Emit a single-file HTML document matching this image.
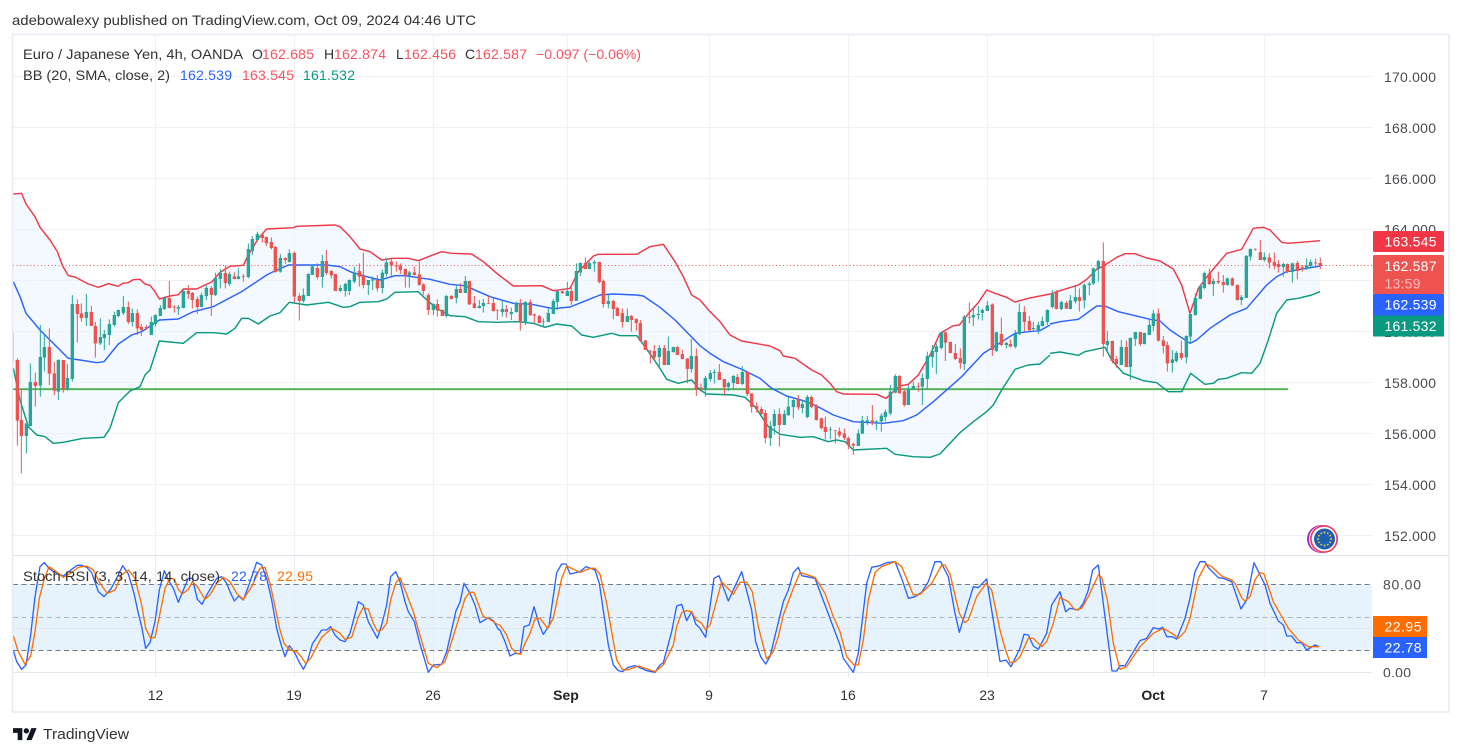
<!DOCTYPE html>
<html><head><meta charset="utf-8"><title>EUR/JPY</title>
<style>html,body{margin:0;padding:0;background:#fff}svg{display:block}
text{font-family:"Liberation Sans",Arial,sans-serif;font-size:14px;fill:#333;}
.w{fill:#fff}.a{fill:#4a4c52}.r{fill:#f7525f}.b{fill:#2962ff}.g{fill:#089981}.o{fill:#ff6d00}
.rw{fill:none;stroke:#ef5350;stroke-width:3}.rb{fill:none;stroke:#ef5350;stroke-width:10}
.gw{fill:none;stroke:#26a69a;stroke-width:3}.gb{fill:none;stroke:#26a69a;stroke-width:10}
.u,.m,.l,.sb,.so{fill:none;stroke-linejoin:round;stroke-width:4.3}
.u{stroke:#f23645}.m{stroke:#2962ff}.l{stroke:#089981}.sb{stroke:#2962ff;stroke-width:4}.so{stroke:#ff6d00;stroke-width:4}
.t{fill:#f3f9fe}.e{fill:#fff}
</style></head><body>
<svg width="1462" height="756" viewBox="0 0 1462 756" xmlns="http://www.w3.org/2000/svg">
<rect width="1462" height="756" fill="#fff"/>
<text x="12" y="25" textLength="464" lengthAdjust="spacingAndGlyphs">adebowalexy published on TradingView.com, Oct 09, 2024 04:46 UTC</text>

<!-- band fill -->
<g transform="translate(0,180) scale(.33333)">
<polygon class="t" points="40,42 65,40 78,72 105,110 120,142 150,180 172,215 188,258 205,287 225,291 265,312 295,322 325,311 355,319 368,310 385,308 400,299 420,298 435,312 450,316 463,332 478,357 510,348 535,344 550,327 590,327 615,315 635,306 660,277 690,259 730,256 745,225 775,175 800,147 880,143 890,139 1005,135 1020,140 1050,170 1050,1125 40,1125"/>
<polygon class="e" points="40,565 60,660 85,740 110,765 135,770 160,790 190,787 250,775 312,772 330,745 355,668 390,633 420,620 435,585 450,570 478,483 550,490 590,458 640,458 680,462 705,445 725,415 745,415 775,432 810,408 840,398 868,367 920,375 985,367 1030,382 1050,380 1050,1125 40,1125"/>
</g>
<g transform="translate(350,220) scale(.33333)">
<polygon class="t" points="0,50 30,87 60,95 95,120 130,115 175,115 205,122 235,110 275,95 305,100 365,102 400,125 440,160 490,198 575,197 610,212 640,208 660,205 685,155 730,108 745,103 860,103 900,80 940,73 975,125 1000,170 1025,225 1050,240 1050,1005 0,1005"/>
<polygon class="e" points="0,260 30,247 85,245 110,237 135,217 205,215 225,235 260,265 300,287 345,290 385,305 440,307 500,305 550,310 585,322 620,312 665,318 695,345 730,352 785,340 810,347 860,347 885,380 930,445 950,478 985,490 1025,480 1050,510 1050,1005 0,1005"/>
</g>
<g transform="translate(700,280) scale(.33333)">
<polygon class="t" points="0,60 30,95 60,125 90,165 125,183 165,190 210,198 240,212 250,228 285,235 335,270 365,285 390,310 410,335 430,342 530,343 558,355 585,330 600,318 625,313 655,285 690,225 720,160 760,137 778,135 810,95 835,68 860,30 885,40 920,52 945,66 985,55 1050,42 1050,825 0,825"/>
<polygon class="e" points="0,330 20,342 100,345 135,352 165,380 205,440 240,463 300,472 340,470 385,485 410,480 435,485 460,510 560,505 585,523 640,530 690,532 720,522 780,458 820,425 860,395 880,375 905,330 945,268 985,255 1020,252 1050,225 1050,825 0,825"/>
</g>
<g transform="translate(1050,220) scale(.33333)">
<polygon class="t" points="0,222 30,212 85,195 110,178 140,148 165,135 200,112 225,101 255,101 290,114 330,123 370,147 395,195 420,280 445,205 475,165 530,100 575,88 610,25 640,22 660,30 695,67 715,70 810,62 810,1005 0,1005"/>
<polygon class="e" points="0,400 30,396 85,406 105,395 165,382 185,420 220,460 280,482 320,488 355,515 395,515 422,460 465,493 490,490 505,478 530,475 575,458 605,460 630,430 655,360 680,280 710,240 745,235 785,225 810,215 810,1005 0,1005"/>
</g>

<!-- stoch background -->
<rect x="13" y="584" width="1359" height="66.5" fill="#e6f3fd"/>

<!-- grid -->
<g stroke="#eff1f6" stroke-width="1" fill="none">
<path d="M13 76.5H1372M13 127.5H1372M13 178.5H1372M13 229.5H1372M13 280.5H1372M13 331.5H1372M13 382.5H1372M13 433.5H1372M13 484.5H1372M13 535.5H1372"/>
<path d="M13 628.5H1372M13 672.5H1372" stroke="#e3e8ef"/>
<path d="M155.5 35V555M294.5 35V555M433.5 35V555M567.5 35V555M709.5 35V555M848.5 35V555M987.5 35V555M1153.5 35V555M1264.5 35V555"/>
<path d="M155.5 556V677M294.5 556V677M433.5 556V677M567.5 556V677M709.5 556V677M848.5 556V677M987.5 556V677M1153.5 556V677M1264.5 556V677" stroke="#e8ecf2"/>
</g>
<path d="M13 584.5H1372" stroke="#787b86" stroke-dasharray="5 3.5"/>
<path d="M13 617.5H1372" stroke="#b2b5be" stroke-dasharray="5 3.5"/>
<path d="M13 650.5H1372" stroke="#787b86" stroke-dasharray="5 3.5"/>

<!-- last price dotted -->
<path d="M13 265.5H1372" stroke="#ef5350" stroke-dasharray="1 2.5"/>

<!-- green horizontal -->
<path d="M13 389.2H1288" stroke="#4caf50" stroke-width="1.8"/>

<!-- bands -->
<g transform="translate(0,180) scale(.33333)">
<polyline class="u" points="40,42 65,40 78,72 105,110 120,142 150,180 172,215 188,258 205,287 225,291 265,312 295,322 325,311 355,319 368,310 385,308 400,299 420,298 435,312 450,316 463,332 478,357 510,348 535,344 550,327 590,327 615,315 635,306 660,277 690,259 730,256 745,225 775,175 800,147 880,143 890,139 1005,135 1020,140 1050,170"/>
<polyline class="m" points="40,305 60,350 78,400 120,450 175,505 205,535 240,540 290,548 312,545 355,492 395,465 425,455 478,420 535,417 580,395 640,380 725,335 800,285 820,275 865,255 980,255 1020,260 1050,275"/>
<polyline class="l" points="40,565 60,660 85,740 110,765 135,770 160,790 190,787 250,775 312,772 330,745 355,668 390,633 420,620 435,585 450,570 478,483 550,490 590,458 640,458 680,462 705,445 725,415 745,415 775,432 810,408 840,398 868,367 920,375 985,367 1030,382 1050,380"/>
<path d="M40 460V545" stroke="#ef5350" stroke-width="3" opacity=".5"/>
<path class="rw" d="M52 535V797M64 628V880M106 578V680M148 445V615M163 545V645M190 540V638M232 358V488M244 370V425M274 378V438M286 426V533M385 365V432M412 388V465M424 432V468M439 435V450M508 303V385M523 375V398M565 315V357M577 336V385M592 350V402M634 318V408M676 256V325M703 277V298M730 282V305M787 160V188M799 170V198M814 172V208M826 198V278M856 232V252M883 215V368M898 340V422M952 250V298M979 210V285M994 270V295M1006 282V333"/>
<path class="rb" d="M52 540V722M64 720V768M106 606V618M148 501V581M163 580V632M190 540V628M232 372V402M244 400V414M274 396V438M286 438V490M385 381V426M412 399V445M424 441V450M439 441V444M508 354V384M523 380V382M565 333V342M577 339V360M592 357V381M634 324V345M676 279V309M703 289V297M730 288V290M787 163V174M799 171V190M814 186V204M826 201V276M856 234V240M883 219V350M898 348V363M952 264V291M979 243V279M994 273V286M1006 282V333"/>
<path class="gw" d="M79 730V820M91 550V738M121 435V650M133 465V575M175 538V660M202 552V632M217 345V605M259 342V438M301 415V495M313 450V510M328 418V495M343 395V440M355 388V412M370 348V405M397 385V440M454 410V465M466 403V440M481 375V408M493 350V390M535 375V405M550 327V385M604 338V382M619 315V360M646 278V348M661 267V325M688 275V318M715 265V298M745 190V295M757 168V225M772 155V185M841 222V278M868 208V248M910 325V368M925 280V348M937 255V285M967 225V323M1021 315V335M1036 308V350M1048 298V345"/>
<path class="gb" d="M79 730V768M91 606V738M121 531V617M133 501V533M175 540V635M202 594V628M217 372V597M259 396V414M301 471V490M313 462V474M328 432V465M343 405V435M355 390V408M370 381V399M397 399V426M454 426V465M466 405V432M481 384V408M493 354V387M535 381V386M550 333V384M604 345V381M619 324V348M646 294V345M661 279V297M688 282V312M715 289V297M745 207V291M757 177V213M772 162V180M841 234V275M868 219V246M910 345V363M925 282V348M937 259V285M967 243V291M1021 324V333M1036 312V333M1048 300V333"/>
</g>
<g transform="translate(350,220) scale(.33333)">
<polyline class="u" points="0,50 30,87 60,95 95,120 130,115 175,115 205,122 235,110 275,95 305,100 365,102 400,125 440,160 490,198 575,197 610,212 640,208 660,205 685,155 730,108 745,103 860,103 900,80 940,73 975,125 1000,170 1025,225 1050,240"/>
<polyline class="m" points="0,155 50,170 90,180 135,167 165,167 240,178 300,193 345,197 420,230 490,250 545,253 610,266 660,261 700,245 750,225 790,222 860,225 880,228 930,262 975,300 1050,377"/>
<polyline class="l" points="0,260 30,247 85,245 110,237 135,217 205,215 225,235 260,265 300,287 345,290 385,305 440,307 500,305 550,310 585,322 620,312 665,318 695,345 730,352 785,340 810,347 860,347 885,380 930,445 950,478 985,490 1025,480 1050,510"/>
<path class="rw" d="M28 130V200M40 98V205M82 165V215M124 112V168M139 125V155M151 130V162M166 145V203M193 140V167M208 125V197M220 190V225M235 220V285M262 238V290M277 268V288M304 225V238M331 190V218M358 183V255M373 228V265M415 228V252M430 235V275M442 268V300M469 255V293M511 237V332M541 238V288M553 280V310M568 285V310M637 213V222M664 200V255M706 112V148M748 125V190M760 178V263M790 240V297M802 260V288M817 265V323M844 285V335M859 295V332M871 300V365M886 360V390M901 390V430M913 375V420M943 375V435M982 378V405M997 390V418M1012 415V490M1039 385V528"/>
<path class="rb" d="M28 153V170M40 168V195M82 180V205M124 125V137M139 137V139M151 137V150M166 147V167M193 157V165M208 163V195M220 193V213M235 225V270M262 252V272M277 270V288M304 228V237M331 207V219M358 183V253M373 250V264M415 250V252M430 249V273M442 270V272M469 267V276M511 249V306M541 246V285M553 283V287M568 288V309M637 214V219M664 213V243M706 129V147M748 126V186M760 183V252M790 243V267M802 264V288M817 279V306M844 288V300M859 297V309M871 309V363M886 361V390M901 392V394M913 393V412M943 384V435M982 381V405M997 402V417M1012 415V447M1039 408V510"/>
<path class="gw" d="M13 140V190M55 180V225M68 170V210M97 148V220M109 113V170M178 152V203M250 250V285M289 225V293M319 195V250M346 168V218M388 240V265M400 237V278M457 240V290M484 263V300M499 245V278M526 243V315M580 295V318M595 265V306M610 237V282M622 213V270M652 186V228M679 130V243M691 127V168M718 125V148M733 120V155M775 225V265M832 265V306M928 375V445M955 350V435M970 380V398M1024 357V458"/>
<path class="gb" d="M13 157V185M55 180V195M68 178V182M97 158V204M109 127V162M178 157V167M250 252V270M289 228V288M319 207V234M346 183V219M388 258V264M400 249V258M457 267V276M484 276V282M499 249V276M526 246V309M580 304V306M595 279V306M610 243V282M622 213V246M652 213V228M679 153V243M691 129V157M718 129V147M733 126V130M775 243V252M832 288V306M928 384V411M955 393V435M970 381V396M1024 408V447"/>
</g>
<g transform="translate(700,280) scale(.33333)">
<polyline class="u" points="0,60 30,95 60,125 90,165 125,183 165,190 210,198 240,212 250,228 285,235 335,270 365,285 390,310 410,335 430,342 530,343 558,355 585,330 600,318 625,313 655,285 690,225 720,160 760,137 778,135 810,95 835,68 860,30 885,40 920,52 945,66 985,55 1050,42"/>
<polyline class="m" points="0,197 30,220 70,245 130,270 180,295 215,325 260,348 310,362 350,378 400,405 460,425 550,430 610,422 650,405 700,365 785,290 850,220 890,195 945,160 985,155 1020,152 1050,135"/>
<polyline class="l" points="0,330 20,342 100,345 135,352 165,380 205,440 240,463 300,472 340,470 385,485 410,480 435,485 460,510 560,505 585,523 640,530 690,532 720,522 780,458 820,425 860,395 880,375 905,330 945,268 985,255 1020,252 1050,225"/>
<path class="rw" d="M3 310V335M58 252V300M73 297V347M112 282V312M142 275V348M155 340V398M170 367V398M184 380V405M196 390V490M238 385V500M295 345V390M334 347V385M349 373V422M364 412V448M376 410V478M406 450V490M418 443V472M433 445V480M445 470V508M460 488V525M517 375V435M598 285V340M613 330V380M655 308V335M736 155V243M751 185V220M766 192V240M781 205V267M808 67V130M877 70V228M904 113V198M931 178V202M973 78V155M988 108V152"/>
<path class="rb" d="M3 323V327M58 276V300M73 297V322M112 291V312M142 276V342M155 340V381M170 378V387M184 387V402M196 399V474M238 402V435M295 358V382M334 351V381M349 376V420M364 415V444M376 441V456M406 451V453M418 454V466M433 460V474M445 474V495M460 492V497M517 421V430M598 288V340M613 334V375M655 318V320M736 157V188M751 186V219M766 219V237M781 234V249M808 111V113M877 73V210M904 162V195M931 192V200M973 96V126M988 123V151"/>
<path class="gw" d="M16 288V350M31 270V305M43 268V310M85 305V333M100 285V327M127 258V315M211 423V498M223 388V465M253 390V435M265 352V408M280 358V415M307 360V400M322 345V415M391 440V478M475 448V498M487 408V462M502 408V435M529 420V450M544 400V455M556 388V425M571 315V405M586 283V340M625 315V375M640 305V330M667 280V375M682 215V325M697 195V262M709 190V282M724 155V208M793 105V270M820 80V138M835 78V118M847 85V122M862 63V93M889 155V216M919 185V205M946 150V205M958 70V165M1000 125V155M1015 125V162M1027 110V140M1042 88V135"/>
<path class="gb" d="M16 294V330M31 279V297M43 276V279M85 309V321M100 288V309M127 276V312M211 438V474M223 402V438M253 402V435M265 380V405M280 360V381M307 372V384M322 351V411M391 447V449M475 460V498M487 421V461M502 421V426M529 424V426M544 407V424M556 396V411M571 335V400M586 288V338M625 327V375M640 318V327M667 294V320M682 228V297M697 212V231M709 199V216M724 157V204M793 110V252M820 105V112M835 102V105M847 90V99M862 76V93M889 157V213M919 189V195M946 162V200M958 96V162M1000 144V147M1015 135V150M1027 123V138M1042 90V126"/>
</g>
<g transform="translate(1050,220) scale(.33333)">
<polyline class="u" points="0,222 30,212 85,195 110,178 140,148 165,135 200,112 225,101 255,101 290,114 330,123 370,147 395,195 420,280 445,205 475,165 530,100 575,88 610,25 640,22 660,30 695,67 715,70 810,62"/>
<polyline class="m" points="0,312 30,305 85,298 140,258 165,258 205,275 255,287 300,298 330,303 360,330 420,370 440,360 480,325 540,285 590,265 650,195 680,170 710,155 810,138"/>
<polyline class="l" points="0,400 30,396 85,406 105,395 165,382 185,420 220,460 280,482 320,488 355,515 395,515 422,460 465,493 490,490 505,478 530,475 575,458 605,460 630,430 655,360 680,280 710,240 745,235 785,225 810,215"/>
<path class="rw" d="M19 210V268M49 243V267M88 205V275M160 67V410M187 362V430M199 408V443M229 362V440M271 336V378M325 265V365M340 348V400M352 365V455M394 362V420M478 145V195M505 155V192M520 165V218M547 172V198M562 193V242M616 85V92M631 60V120M658 100V145M673 98V148M685 120V158M712 130V160M742 123V178M757 135V155M797 116V140M811 113V147"/>
<path class="rb" d="M19 216V267M49 249V266M88 231V243M160 123V372M187 363V423M199 417V432M229 381V441M271 336V372M325 280V362M340 361V378M352 375V430M394 399V414M478 160V192M505 183V187M520 186V195M547 175V196M562 195V240M616 88V90M631 96V120M658 112V128M673 126V138M685 132V141M712 132V156M742 129V153M757 142V148M797 128V130M811 129V138"/>
<path class="gw" d="M7 210V265M34 243V270M61 225V268M76 195V250M103 190V265M118 185V225M130 142V195M145 120V185M172 333V400M214 360V435M241 352V480M256 336V378M283 338V373M298 300V345M310 270V333M367 390V458M379 393V428M409 346V430M421 280V370M436 220V287M451 195V237M463 155V208M490 175V228M532 173V197M574 225V255M589 105V234M601 85V122M643 97V125M700 128V170M727 128V188M770 115V150M782 118V142"/>
<path class="gb" d="M7 222V261M34 246V267M61 241V267M76 231V244M103 195V241M118 191V195M130 145V191M145 123V147M172 363V375M214 381V435M241 354V441M256 336V357M283 339V372M298 315V345M310 280V318M367 418V429M379 399V423M409 348V412M421 282V350M436 234V285M451 198V237M463 159V204M490 183V192M532 175V195M574 231V240M589 108V234M601 87V110M643 111V120M700 132V141M727 130V156M770 137V146M782 126V138"/>
</g>

<!-- Stoch -->
<g transform="translate(0,550) scale(.33333)">
<polyline class="sb" points="40,300 50,335 65,358 78,345 92,255 105,140 120,50 133,38 147,55 160,65 190,78 215,58 232,46 245,46 260,52 275,68 295,125 312,140 332,118 350,85 368,47 385,72 402,130 415,190 425,230 437,295 450,278 465,215 478,120 493,62 505,90 520,115 535,157 550,120 565,85 577,85 592,148 606,163 620,135 635,110 650,85 665,80 680,100 690,125 703,153 716,138 730,150 745,110 757,75 770,37 785,45 800,85 815,150 830,235 842,280 855,320 868,287 885,310 897,335 910,358 922,335 937,282 950,263 965,240 980,240 992,230 1005,255 1020,270 1035,275 1050,250 1075,155 1090,165 1105,215 1132,265 1145,225 1160,165 1172,80 1187,65 1200,95 1215,155 1225,185 1243,215 1258,275 1285,367 1300,345 1325,343 1340,305 1368,182 1380,157 1392,100 1410,130 1425,165 1440,218 1465,203 1480,212 1495,238 1500,240"/>
<polyline class="so" points="40,258 55,305 75,343 92,318 105,245 118,145 132,90 147,50 165,62 190,82 215,68 235,52 260,48 280,60 300,100 322,130 345,120 365,75 385,60 405,85 425,165 437,235 452,265 465,262 478,200 495,115 510,85 523,87 535,118 547,132 565,118 577,95 592,110 615,148 632,132 650,100 670,82 690,95 710,130 730,148 755,110 780,55 795,52 810,100 825,170 840,240 852,280 870,300 890,305 905,322 917,340 932,325 950,290 965,262 995,235 1020,250 1035,268 1055,262 1075,200 1090,172 1105,178 1120,220 1132,243 1145,240 1160,220 1172,150 1187,100 1200,83 1215,120 1240,185 1258,250 1285,340 1310,353 1335,335 1350,290 1380,195 1395,145 1410,127 1422,127 1440,175 1450,200 1465,205 1495,225 1500,225"/>
</g>
<g transform="translate(500,550) scale(.33333)">
<polyline class="sb" points="0,240 15,275 30,318 45,310 60,312 72,230 88,225 102,170 118,225 130,253 147,228 170,68 185,42 198,42 210,72 240,65 258,50 285,60 298,100 325,285 340,345 355,362 367,365 385,352 405,347 440,362 465,367 480,345 490,338 515,245 530,168 545,163 560,212 575,185 587,222 600,235 617,262 642,85 657,77 685,153 725,65 755,180 767,275 782,320 797,342 810,320 850,155 865,120 880,68 895,52 905,77 945,85 1020,285 1030,325 1060,367 1075,310 1100,100 1115,52 1140,47 1160,38 1185,35 1205,85 1225,145 1245,140 1265,127 1285,95 1305,35 1322,35 1345,80 1365,190 1378,247 1420,110 1435,113 1460,87 1500,335"/>
<polyline class="so" points="0,225 20,255 35,295 50,310 62,313 75,280 90,250 105,207 120,205 143,235 160,205 185,85 200,48 240,67 270,55 285,55 300,73 320,160 350,330 367,358 382,360 415,348 445,358 465,365 490,345 520,285 530,230 545,188 560,182 575,185 587,208 605,220 617,240 630,225 645,170 665,95 700,133 720,97 740,97 757,125 775,230 800,327 820,305 835,260 850,195 880,115 900,67 945,82 975,130 1000,200 1020,245 1040,320 1062,345 1075,345 1090,270 1105,150 1125,68 1145,50 1185,35 1205,50 1240,135 1260,133 1295,100 1325,45 1335,45 1350,72 1378,190 1395,218 1405,210 1430,140 1458,100 1475,120 1500,240"/>
</g>
<g transform="translate(1000,520) scale(.33333)">
<polyline class="sb" points="0,425 18,420 33,440 60,385 72,343 85,345 100,378 115,388 140,340 155,255 180,215 197,275 210,265 235,270 250,250 265,210 278,150 295,135 336,453 350,453 360,437 375,437 420,362 440,355 460,323 475,327 488,322 500,350 515,350 530,357 555,295 570,235 585,155 600,125 615,125 625,143 655,173 670,175 695,185 723,267 740,240 762,128 795,195 810,250 835,303 850,315 860,348 875,348 890,368 905,368 920,390 945,375 958,380"/>
<polyline class="so" points="0,330 15,385 30,428 45,425 60,410 85,355 100,355 125,380 140,365 160,310 180,232 205,245 225,270 245,265 265,230 295,165 305,172 322,240 340,370 360,448 380,440 420,380 460,340 490,325 520,343 535,355 555,335 570,295 595,175 618,132 635,140 665,168 695,180 705,190 725,233 735,243 750,230 765,180 780,158 792,162 820,245 850,298 865,325 895,360 925,380 958,380"/>
</g>

<!-- borders -->
<g fill="none" stroke="#e9ebf3">
<rect x="12.5" y="34.5" width="1436.5" height="677.5" stroke-width="1.6"/>
<path d="M13 555.5H1449" stroke="#e0e3eb"/>
</g>

<!-- legends -->
<text x="23" y="59" textLength="220" lengthAdjust="spacingAndGlyphs">Euro / Japanese Yen, 4h, OANDA</text>
<text x="252" y="59" textLength="10">O</text><text class="r" x="262" y="59" textLength="52">162.685</text>
<text x="324" y="59" textLength="10">H</text><text class="r" x="334" y="59" textLength="52">162.874</text>
<text x="396" y="59" textLength="8">L</text><text class="r" x="404" y="59" textLength="52">162.456</text>
<text x="465" y="59" textLength="10">C</text><text class="r" x="475" y="59" textLength="52">162.587</text>
<text class="r" x="536" y="59" textLength="105" lengthAdjust="spacingAndGlyphs">−0.097 (−0.06%)</text>
<text x="23" y="80" textLength="147" lengthAdjust="spacingAndGlyphs">BB (20, SMA, close, 2)</text>
<text class="b" x="180" y="80" textLength="52">162.539</text>
<text class="r" x="242" y="80" textLength="52">163.545</text>
<text class="g" x="303" y="80" textLength="52">161.532</text>

<text x="23" y="581" textLength="197" lengthAdjust="spacingAndGlyphs">Stoch RSI (3, 3, 14, 14, close)</text>
<text class="b" x="231" y="581" textLength="36">22.78</text>
<text class="o" x="277" y="581" textLength="36">22.95</text>

<!-- price axis -->
<text class="a" x="1384" y="82" textLength="52">170.000</text>
<text class="a" x="1384" y="133" textLength="52">168.000</text>
<text class="a" x="1384" y="184" textLength="52">166.000</text>
<text class="a" x="1384" y="234.5" textLength="52">164.000</text>
<text class="a" x="1384" y="337" textLength="52">160.000</text>
<text class="a" x="1384" y="388" textLength="52">158.000</text>
<text class="a" x="1384" y="439" textLength="52">156.000</text>
<text class="a" x="1384" y="490" textLength="52">154.000</text>
<text class="a" x="1384" y="541" textLength="52">152.000</text>
<text class="a" x="1383" y="589.5" textLength="38">80.00</text>
<text class="a" x="1383" y="677.5" textLength="28">0.00</text>
<rect x="1373" y="677" width="75" height="6" fill="#fff"/>

<!-- tags -->
<rect x="1373" y="231" width="71" height="21" rx="1.5" fill="#f23645"/>
<text class="w" x="1384.5" y="246.7" textLength="52">163.545</text>
<rect x="1373" y="255" width="71" height="39" rx="1.5" fill="#ef5350"/>
<text class="w" x="1384.5" y="271" textLength="52">162.587</text>
<text x="1384.5" y="288.5" textLength="36" style="fill:#fbbab9">13:59</text>
<rect x="1373" y="294" width="71" height="21.5" fill="#2962ff"/>
<text class="w" x="1384.5" y="309.7" textLength="52">162.539</text>
<rect x="1373" y="315.5" width="71" height="21" fill="#089981"/>
<text class="w" x="1384.5" y="331" textLength="52">161.532</text>
<rect x="1373" y="616" width="54" height="21" fill="#ff6d00"/>
<text class="w" x="1384.5" y="631.5" textLength="37">22.95</text>
<rect x="1373" y="637" width="54" height="21" fill="#2962ff"/>
<text class="w" x="1384.5" y="652.5" textLength="37">22.78</text>

<!-- time axis -->
<g text-anchor="middle" style="fill:#333">
<text x="155.5" y="700">12</text><text x="294" y="700">19</text><text x="433" y="700">26</text>
<text x="566" y="700" style="font-weight:bold;fill:#222">Sep</text>
<text x="709" y="700">9</text><text x="848" y="700">16</text><text x="987" y="700">23</text>
<text x="1153" y="700" style="font-weight:bold;fill:#222">Oct</text>
<text x="1264" y="700">7</text>
</g>

<!-- flag -->
<circle cx="1321" cy="539" r="14" fill="#a02dbb"/>
<circle cx="1322.6" cy="539" r="13.6" fill="#fff"/>
<circle cx="1324" cy="539" r="14" fill="#f23a5e"/>
<circle cx="1324" cy="539" r="12.3" fill="#fff"/>
<circle cx="1324.5" cy="539" r="10.5" fill="#1f5fb0"/>
<g fill="#f2cb3a">
<circle cx="1324.5" cy="532.5" r="1"/><circle cx="1324.5" cy="545.5" r="1"/><circle cx="1318" cy="539" r="1"/><circle cx="1331" cy="539" r="1"/>
<circle cx="1321.2" cy="533.4" r=".9"/><circle cx="1327.8" cy="533.4" r=".9"/><circle cx="1321.2" cy="544.6" r=".9"/><circle cx="1327.8" cy="544.6" r=".9"/>
<circle cx="1318.9" cy="535.7" r=".9"/><circle cx="1330.1" cy="535.7" r=".9"/><circle cx="1318.9" cy="542.3" r=".9"/><circle cx="1330.1" cy="542.3" r=".9"/>
</g>

<!-- logo -->
<g transform="translate(13,725.5) scale(.667)" fill="#131722">
<path d="M14 22H7V11H0V4h14v18zM28 22h-8l7.5-18h8L28 22z"/><circle cx="20" cy="8" r="4"/>
</g>
<text x="43" y="739" textLength="86" lengthAdjust="spacingAndGlyphs" style="font-size:15px;fill:#333">TradingView</text>
</svg>
</body></html>
